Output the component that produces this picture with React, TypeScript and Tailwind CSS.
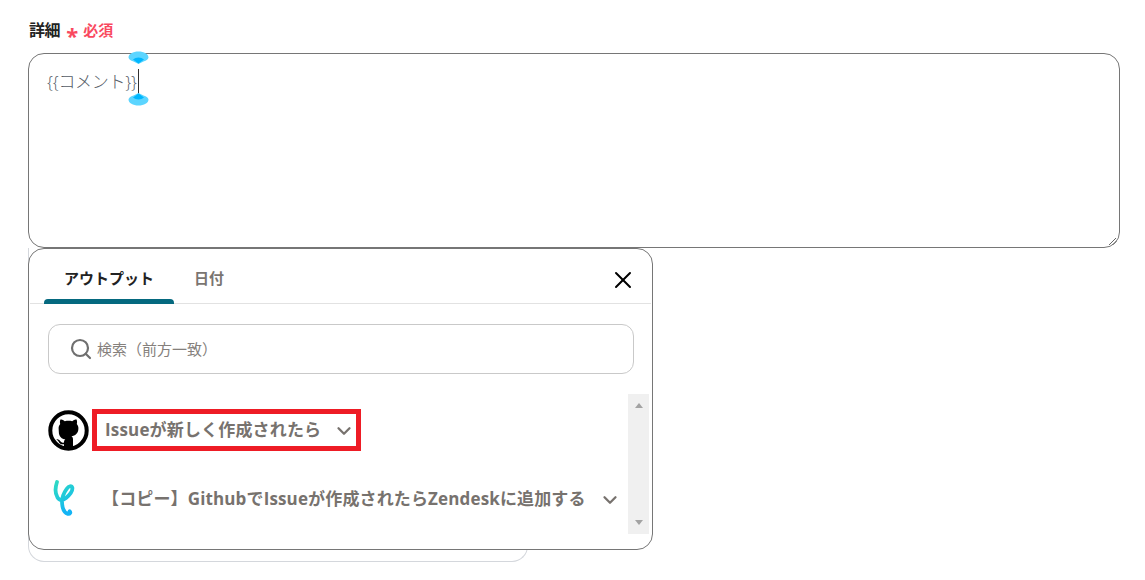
import { ChevronDown, Search, X } from 'lucide-react'

const font = "font-['Open_Sans','Noto_Sans_CJK_JP',sans-serif]"

function GithubLogo() {
  return (
    <svg width="41" height="41" viewBox="0 0 41 41" className="flex-shrink-0">
      <circle cx="20.5" cy="20.5" r="18.2" fill="#fff" stroke="#000" strokeWidth="4" />
      <path
        d="M10.6 18.2c0-1.8.6-3.2 1.6-4.3-.2-.5-.6-2.1.2-4.3 0 0 1.6-.4 4.4 1.6 1.2-.4 2.5-.5 3.700-.5s2.500.1 3.700.5c2.800-2 4.400-1.600 4.400-1.600.8 2.200.4 3.800.2 4.300 1 1.100 1.600 2.500 1.600 4.300 0 5.600-3.400 7.400-6.900 7.900 1 .8 1.500 2 1.500 3.400v8.500a18 18 0 0 1-9 0v-3.800c-3.300.7-4.500-.9-5.300-2.500-.5-1-1.300-1.800-2.300-2.300 2-.5 3.400 1 4.200 2.200.8 1.100 2 1.300 3.400.8 0-1.300.4-2.300 1.300-3.100-3.300-.5-6.500-2.300-6.500-7.900z"
        fill="#000"
      />
    </svg>
  )
}

function YoomLogo() {
  return (
    <svg width="41" height="41" viewBox="0 0 41 41" className="flex-shrink-0">
      <defs>
        <linearGradient id="yoom" x1="0" y1="0" x2="0.4" y2="1">
          <stop offset="0" stopColor="#2fd9c4" />
          <stop offset="0.6" stopColor="#1fc8dc" />
          <stop offset="1" stopColor="#14b4f5" />
        </linearGradient>
      </defs>
      <path
        d="M9 4c-2 6-2 11.500.5 15.500 2.200 3.400 5.500 3 8.500.5 3.500-3 7-7 6.300-10.500-.6-2.200-3.500-1.500-5.600 1.300-3.800 5.200-5.400 12-4.200 17.700.6 3.200 2.500 6.500 5.400 7.300 1.900.5 3.100-1.200 1.800-2.600"
        fill="none"
        stroke="url(#yoom)"
        strokeWidth="3.800"
        strokeLinecap="round"
      />
    </svg>
  )
}

function SelectionHandle({ flip }: { flip?: boolean }) {
  return (
    <svg width="21" height="13" viewBox="0 0 21 13" className={flip ? 'rotate-180' : ''}>
      <path d="M10.500 0.500C5 0.500 0.500 3 0.500 6.500c0 1.500 2 3 5 4l5 2.500 5-2.500c3-1 5-2.500 5-4C20.500 3 16 0.500 10.500 0.500z" fill="#5cd5ff" />
      <path d="M10.500 12.500 5 8.500c1.500-1.300 3.500-2 5.500-2s4 .7 5.500 2z" fill="#00b7ff" />
    </svg>
  )
}

export default function App() {
  return (
    <div className={`w-[1145px] h-[580px] overflow-hidden bg-white pl-[28px] pt-[20px] ${font}`}>
      <div className="flex items-center h-[20px] pl-[1px] gap-[3px]">
        <span className="text-[16px] font-bold tracking-[-0.4px] text-[#222]">詳細</span>
        <span className="text-[22px] leading-none font-bold text-[#f9495f] h-[14px] mt-[2px] ml-[3px]">*</span>
        <span className="text-[15px] font-bold text-[#f9495f] ml-[2px]">必須</span>
      </div>

      <div className="relative mt-[13px] w-[1092px] h-[195px] rounded-[16px] border border-[#767676] px-[18px] pt-[15px]">
        <div className="relative inline-block text-[17px] tracking-[-0.3px] leading-[26px] text-[#555c66] font-light border-r border-[#333] pr-[1px]">
          {'{{コメント}}'}
          <span className="absolute right-[-11px] top-[-18px] leading-none">
            <SelectionHandle />
          </span>
          <span className="absolute right-[-11px] bottom-[-11px] leading-none">
            <SelectionHandle flip />
          </span>
        </div>
        <svg width="10" height="10" viewBox="0 0 10 10" className="absolute right-[2px] bottom-[1px]">
          <path d="M9 2 2 9M9.500 5 5.500 9" stroke="#666" strokeWidth="1" />
        </svg>

        <div className="absolute left-[-1px] top-[194px] z-10 w-[625px] h-[302px] rounded-[16px] border border-[#767676] bg-white">
          <div className="flex items-stretch h-[55px] mx-[1px] pl-[14px] border-b border-[#e2e2e2] relative">
            <div className="w-[130px] flex items-center justify-center relative pt-[4px]">
              <span className="text-[15px] font-bold text-[#222]">アウトプット</span>
              <span className="absolute left-0 right-0 bottom-[-1px] h-[5px] rounded-t-[4px] bg-[#05697f]" />
            </div>
            <div className="w-[70px] flex items-center justify-center pt-[4px]">
              <span className="text-[15px] font-bold text-[#7a7571]">日付</span>
            </div>
            <button className="absolute right-[14px] top-[17px] text-black">
              <X className="w-[28px] h-[28px]" strokeWidth={1.700} />
            </button>
          </div>

          <div className="mx-[19px] mt-[20px] h-[50px] w-[586px] rounded-[12px] border border-[#c9c9c9] flex items-center pl-[20px]">
            <Search className="w-[24px] h-[24px] text-[#6f6f6f]" strokeWidth={2.200} />
            <span className="ml-[4px] text-[15px] text-[#85807c]">検索（前方一致）</span>
          </div>

          <div className="relative mt-[20px] h-[140px] pt-[16px]">
            <div className="flex items-center h-[41px] pl-[19px]">
              <GithubLogo />
              <div className="ml-[3px] -mt-[2px] w-[269px] h-[42px] border-[5px] border-[#ee1c25] flex items-center pl-[8px]">
                <span className="text-[17px] font-bold tracking-[0.17px] text-[#77726e] whitespace-nowrap">Issueが新しく作成されたら</span>
                <ChevronDown className="w-[22px] h-[22px] ml-[12px] mt-[3px] text-[#77726e]" strokeWidth={2.500} />
              </div>
            </div>
            <div className="flex items-center h-[41px] mt-[27px] pl-[19px]">
              <YoomLogo />
              <span className="ml-[13px] text-[17px] font-bold tracking-[0.14px] text-[#77726e] whitespace-nowrap">【コピー】GithubでIssueが作成されたらZendeskに追加する</span>
              <ChevronDown className="w-[22px] h-[22px] ml-[13px] mt-[3px] text-[#77726e]" strokeWidth={2.500} />
            </div>
            <div className="absolute right-[3px] top-0 w-[21px] h-[140px] bg-[#f0f0f0] flex flex-col items-center justify-between py-[9px]">
              <span className="w-0 h-0 border-x-[4.500px] border-x-transparent border-b-[5px] border-b-[#a3a3a3]" />
              <span className="w-0 h-0 border-x-[4.500px] border-x-transparent border-t-[5px] border-t-[#a3a3a3]" />
            </div>
          </div>
        </div>
      </div>

      <div className="w-[500px] h-[314px] rounded-b-[16px] border border-t-0 border-[#d4d7dc]" />
    </div>
  )
}
